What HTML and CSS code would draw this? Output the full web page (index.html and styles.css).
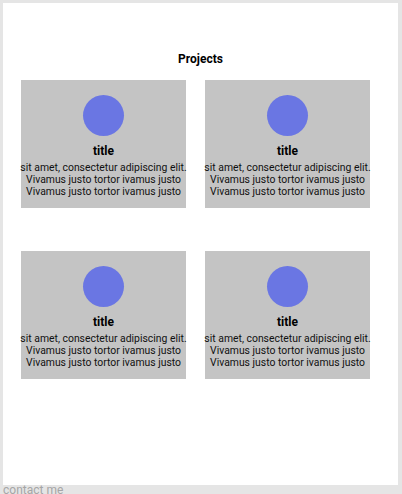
FILE: index.html
```html
<!DOCTYPE html>
<html>
<head>
<meta charset="utf-8">
<link rel="stylesheet" href="styles.css">
</head>
<body>
<main class="panel">
  <h2 class="heading">Projects</h2>
  <div class="grid">
    <div class="card">
      <div class="avatar"></div>
      <div class="title">title</div>
      <p class="desc">sit amet, consectetur adipiscing elit.<br>Vivamus justo tortor ivamus justo<br>Vivamus justo tortor ivamus justo</p>
    </div>
    <div class="card">
      <div class="avatar"></div>
      <div class="title">title</div>
      <p class="desc">sit amet, consectetur adipiscing elit.<br>Vivamus justo tortor ivamus justo<br>Vivamus justo tortor ivamus justo</p>
    </div>
    <div class="card">
      <div class="avatar"></div>
      <div class="title">title</div>
      <p class="desc">sit amet, consectetur adipiscing elit.<br>Vivamus justo tortor ivamus justo<br>Vivamus justo tortor ivamus justo</p>
    </div>
    <div class="card">
      <div class="avatar"></div>
      <div class="title">title</div>
      <p class="desc">sit amet, consectetur adipiscing elit.<br>Vivamus justo tortor ivamus justo<br>Vivamus justo tortor ivamus justo</p>
    </div>
  </div>
</main>
<footer class="footer">contact me</footer>
</body>
</html>
```
FILE: styles.css
```css
html, body {
  margin: 0;
  padding: 0;
  background: #e5e5e5;
  font-family: Roboto, "Liberation Sans", sans-serif;
}
body {
  padding: 3px 4px 0 3px;
  height: 494px;
  box-sizing: border-box;
  overflow: hidden;
}
.panel {
  background: #fff;
  height: 482px;
  box-sizing: border-box;
  padding: 49px 0 0 18px;
}
.heading {
  margin: 0 0 14px -18px;
  text-align: center;
  font-size: 12px;
  font-weight: 700;
  line-height: 14px;
  color: #000;
}
.grid {
  display: grid;
  grid-template-columns: 165px 165px;
  column-gap: 19px;
  row-gap: 43px;
}
.card {
  background: #c4c4c4;
  height: 128px;
  display: flex;
  flex-direction: column;
  align-items: center;
  padding-top: 15px;
  box-sizing: border-box;
}
.avatar {
  width: 41px;
  height: 41px;
  border-radius: 50%;
  background: #6a76e3;
}
.title {
  margin-top: 8px;
  font-size: 12px;
  font-weight: 700;
  line-height: 15px;
  color: #000;
}
.desc {
  margin: 3px 0 0;
  font-size: 10.4px;
  line-height: 12px;
  text-align: center;
  white-space: nowrap;
  color: #111;
}
.footer {
  font-size: 12px;
  line-height: 14px;
  color: #a6a6a6;
  margin-top: -2px;
}
```
